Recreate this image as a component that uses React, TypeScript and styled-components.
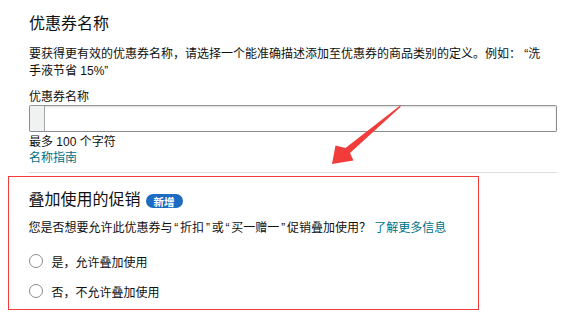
import React from "react";
import styled, { createGlobalStyle } from "styled-components";

const Global = createGlobalStyle`
  html, body { margin: 0; padding: 0; background: #ffffff; }
  body {
    font-family: "Liberation Sans", "Noto Sans CJK SC", sans-serif;
    color: #0f1111;
    width: 572px;
    height: 317px;
    overflow: hidden;
  }
  * { box-sizing: border-box; }
`;

const Page = styled.div`
  position: relative;
  width: 572px;
  height: 317px;
  padding: 13px 15px 0 8px;
`;

const TopSection = styled.section`
  padding-left: 21px;
  display: flex;
  flex-direction: column;
`;

const Title = styled.h2`
  margin: 0;
  font-size: 16px;
  line-height: 22px;
  font-weight: 400;
  color: #0f1111;
`;

const Paragraph = styled.p<{ $mt?: number }>`
  margin: ${(p) => p.$mt ?? 0}px 0 0;
  max-width: 522px;
  font-size: 12px;
  line-height: 17px;
  color: #0f1111;
`;

const Label = styled.label`
  display: block;
  margin-top: 9px;
  font-size: 12px;
  line-height: 16px;
`;

const InputWrap = styled.div`
  display: flex;
  height: 27px;
  border: 1px solid #888c8c;
  border-top-color: #949494;
  border-radius: 2px;
  box-shadow: inset 0 1px 2px rgba(15, 17, 17, 0.15);
  overflow: hidden;
`;

const Prefix = styled.div`
  width: 15px;
  background: #f0f2f2;
  border-right: 1px solid #a6a6a6;
`;

const Input = styled.input`
  flex: 1;
  border: none;
  outline: none;
  background: transparent;
  font: inherit;
  font-size: 12px;
`;

const Hint = styled.div<{ $mt?: number }>`
  margin-top: ${(p) => p.$mt ?? 0}px;
  font-size: 12px;
  line-height: 16px;
`;

const Link = styled.a`
  color: #007185;
  text-decoration: none;
  font-size: 12px;
  line-height: 16px;
  cursor: pointer;
`;

const Divider = styled.hr`
  margin: 6px 0 0 21px;
  border: none;
  border-top: 1px solid #dcdfdf;
  height: 0;
`;

const PromoBox = styled.section`
  margin-top: 3px;
  width: 471px;
  height: 134px;
  border: 1.5px solid #f23c3c;
  padding: 12px 0 0 19.5px;
`;

const HeadingRow = styled.div`
  display: flex;
  align-items: center;
  gap: 5px;
  height: 22px;
`;

const Heading = styled.h3`
  margin: 0;
  font-size: 16px;
  line-height: 22px;
  font-weight: 400;
`;

const Badge = styled.span`
  display: inline-flex;
  align-items: center;
  justify-content: center;
  height: 14px;
  padding: 0 8px;
  border-radius: 7px;
  background: #1c6cc3;
  color: #ffffff;
  font-size: 10.5px;
  font-weight: 700;
  margin-top: 2px;
`;

const Question = styled.p`
  margin: 9px 0 0;
  font-size: 12px;
  line-height: 17px;
`;

const Quote = styled.span`
  padding: 0 1.8px;
`;

const RadioList = styled.div`
  display: flex;
  flex-direction: column;
  margin-top: 9px;
`;

const RadioRow = styled.label`
  display: flex;
  align-items: center;
  gap: 9px;
  height: 30px;
  font-size: 12px;
  cursor: pointer;
`;

const Circle = styled.span`
  width: 14px;
  height: 14px;
  border-radius: 50%;
  border: 1px solid #888c8c;
  background: #fff;
  flex: none;
`;

const Arrow = styled.svg`
  position: absolute;
  left: 0;
  top: 0;
  pointer-events: none;
`;

export default function App() {
  return (
    <>
      <Global />
      <Page>
        <TopSection>
          <Title>优惠券名称</Title>
          <Paragraph $mt={11}>
            要获得更有效的优惠券名称，请选择一个能准确描述添加至优惠券的商品类别的定义。例如：
            “洗手液节省 15%”
          </Paragraph>
          <Label>优惠券名称</Label>
          <InputWrap>
            <Prefix />
            <Input aria-label="优惠券名称" />
          </InputWrap>
          <Hint $mt={2}>最多 100 个字符</Hint>
          <Link>名称指南</Link>
        </TopSection>
        <Divider />
        <PromoBox>
          <HeadingRow>
            <Heading>叠加使用的促销</Heading>
            <Badge>新增</Badge>
          </HeadingRow>
          <Question>
            您是否想要允许此优惠券与<Quote>“</Quote>折扣<Quote>”</Quote>或<Quote>“</Quote>买一赠一<Quote>”</Quote>促销叠加使用？{" "}
            <Link>了解更多信息</Link>
          </Question>
          <RadioList>
            <RadioRow>
              <Circle />
              是，允许叠加使用
            </RadioRow>
            <RadioRow>
              <Circle />
              否，不允许叠加使用
            </RadioRow>
          </RadioList>
        </PromoBox>
        <Arrow width="572" height="317" viewBox="0 0 572 317">
          <polygon
            points="401,106.5 350,153 353.5,160.5 332,164 335.5,145.5 345.5,148 399.5,106"
            fill="#f23c3c"
          />
        </Arrow>
      </Page>
    </>
  );
}
